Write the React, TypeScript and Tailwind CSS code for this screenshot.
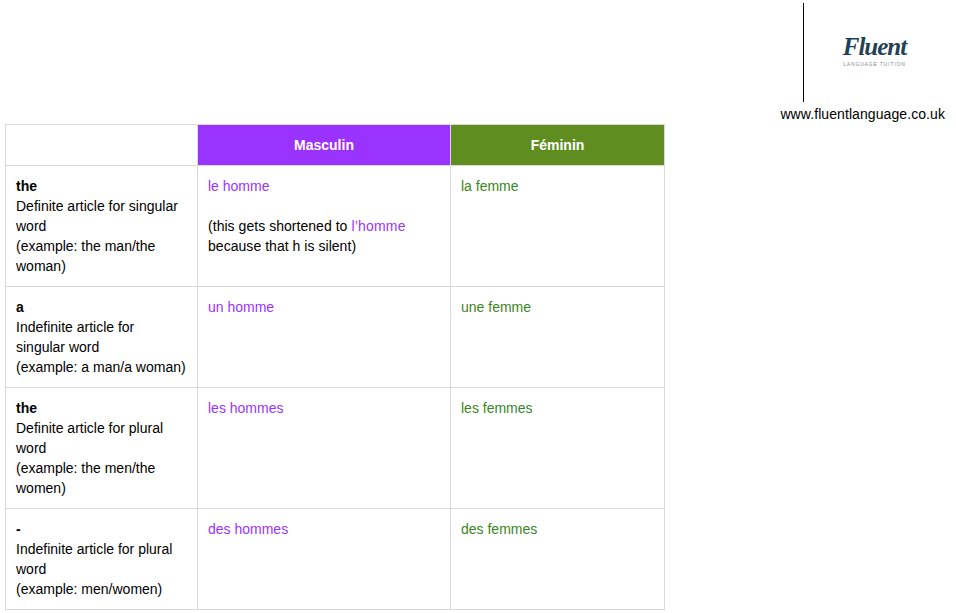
import React from 'react';

interface Row {
  id: string;
  title: string;
  lines: string[];
  masc: string;
  fem: string;
}

const rows: Row[] = [
  {
    id: 'the-singular',
    title: 'the',
    lines: ['Definite article for singular word', '(example: the man/the woman)'],
    masc: 'le homme',
    fem: 'la femme'
  },
  {
    id: 'a',
    title: 'a',
    lines: ['Indefinite article for singular word', '(example: a man/a woman)'],
    masc: 'un homme',
    fem: 'une femme'
  },
  {
    id: 'the-plural',
    title: 'the',
    lines: ['Definite article for plural word', '(example: the men/the women)'],
    masc: 'les hommes',
    fem: 'les femmes'
  },
  {
    id: 'none',
    title: '-',
    lines: ['Indefinite article for plural word', '(example: men/women)'],
    masc: 'des hommes',
    fem: 'des femmes'
  }
];

export default function App() {
  return (
    <div className="w-[956px] h-[613px] overflow-hidden bg-white text-black font-['Liberation_Sans',Arial,sans-serif] text-[14px] leading-[20px]">
      <div className="flex flex-col items-end h-[124px] pt-[3px] pr-[11px]">
        <div className="flex items-center justify-center w-[142px] h-[99px] border-l border-black">
          <div className="flex flex-col items-center gap-[1px] pb-[4px]">
            <span className="font-['Liberation_Serif',serif] italic font-bold text-[25px] leading-[26px] tracking-[-1px] text-[#1f4257]">
              Fluent
            </span>
            <span className="font-['Liberation_Sans',sans-serif] text-[5px] leading-[6px] tracking-[0.85px] text-[#808a90] whitespace-nowrap">
              LANGUAGE TUITION
            </span>
          </div>
        </div>
        <div className="mt-[2px] whitespace-nowrap tracking-[0.08px]">www.fluentlanguage.co.uk</div>
      </div>
      <div className="pl-[5px]">
        <table className="table-fixed border-collapse w-[659px]">
          <colgroup>
            <col className="w-[192px]" />
            <col className="w-[253px]" />
            <col className="w-[214px]" />
          </colgroup>
          <thead>
            <tr>
              <th className="border border-[#d9d9d9] p-[10px]"></th>
              <th className="border border-[#d9d9d9] p-[10px] bg-[#9b33ff] text-white font-bold text-center">Masculin</th>
              <th className="border border-[#d9d9d9] p-[10px] bg-[#5f8d20] text-white font-bold text-center">Féminin</th>
            </tr>
          </thead>
          <tbody>
            {rows.map((row) => (
              <tr key={row.id}>
                <td className="border border-[#d9d9d9] p-[10px] align-top">
                  <strong className="block font-bold">{row.title}</strong>
                  {row.lines.map((line) => (
                    <div key={line}>{line}</div>
                  ))}
                </td>
                <td className="border border-[#d9d9d9] p-[10px] align-top">
                  <div className="text-[#9b33ff]">{row.masc}</div>
                  {row.id === 'the-singular' && (
                    <div className="mt-[20px] tracking-[0.04px]">
                      (this gets shortened to <span className="text-[#9b33ff] tracking-[0.2px]">l’homme</span> because that h is silent)
                    </div>
                  )}
                </td>
                <td className="border border-[#d9d9d9] p-[10px] align-top text-[#38861d]">{row.fem}</td>
              </tr>
            ))}
          </tbody>
        </table>
      </div>
    </div>
  );
}
